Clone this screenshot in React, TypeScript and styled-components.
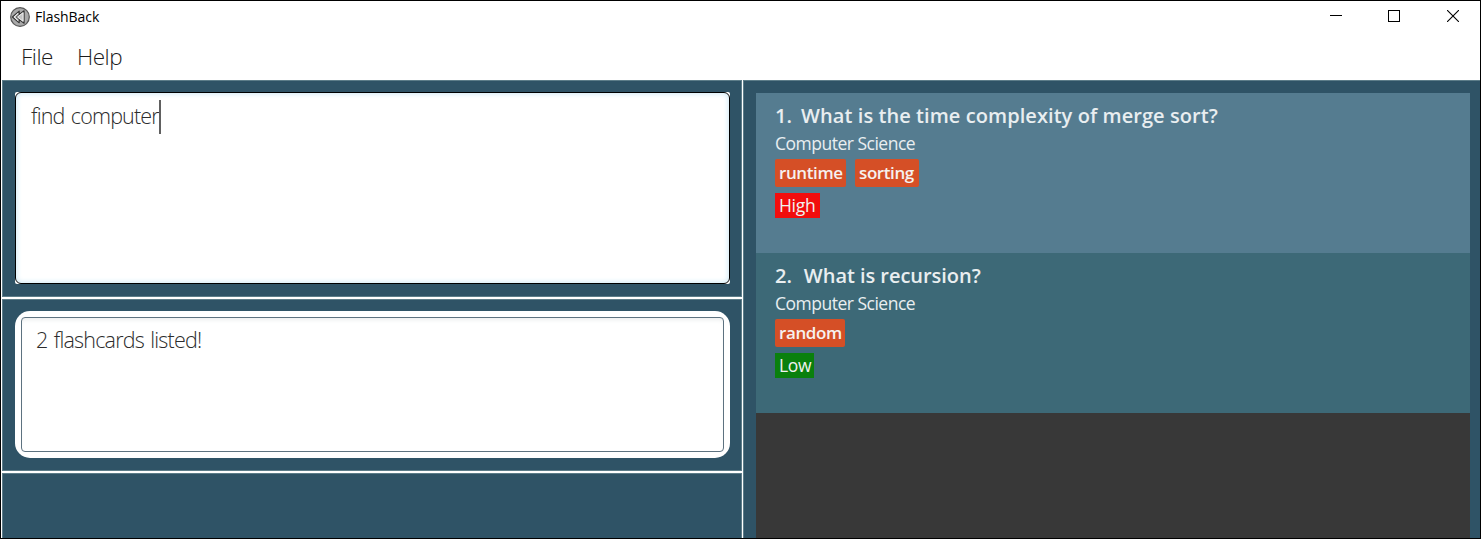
import React from "react";
import styled, { createGlobalStyle, css } from "styled-components";

const GlobalStyle = createGlobalStyle`
  * { box-sizing: border-box; }
  body { margin: 0; overflow: hidden; background: #fff; }
`;

const Window = styled.div`
  width: 1481px;
  height: 539px;
  border: 1px solid #000;
  padding-left: 1px;
  background: #fff;
  display: flex;
  flex-direction: column;
  font-family: "Open Sans", "Noto Sans", sans-serif;
`;

const TitleBar = styled.header`
  height: 31px;
  flex: none;
  display: flex;
  align-items: center;
  padding-left: 8px;
`;

const Title = styled.span`
  margin-left: 5px;
  flex: 1;
  font-size: 14px;
  line-height: 20px;
  letter-spacing: -0.05px;
  color: #000;
`;

const Controls = styled.div`
  display: flex;
  gap: 46px;
  padding: 0 21px 2px 0;
  svg { display: block; }
  svg:last-child { margin-left: 1px; }
`;

const MenuBar = styled.nav`
  height: 48px;
  flex: none;
  display: flex;
  gap: 24px;
  padding: 9px 0 0 19px;
`;

const MenuItem = styled.span<{ $w: number }>`
  width: ${(p) => p.$w}px;
  white-space: nowrap;
  font-size: 22.5px;
  line-height: 32px;
  font-weight: 300;
  letter-spacing: -0.5px;
  color: #1c1c1c;
`;

const Split = styled.main`
  flex: 1;
  min-height: 0;
  display: flex;
  gap: 1px;
`;

const LeftColumn = styled.div`
  width: 740px;
  display: flex;
  flex-direction: column;
  gap: 2px;
`;

const edge = css`
  background: #2f5366;
  border: 1px solid #5d7d89;
`;

const Pane = styled.section<{ $h?: number }>`
  ${edge}
  ${(p) => (p.$h ? `height: ${p.$h}px; flex: none;` : "flex: 1; border-bottom: 0;")}
  padding: 11px 11px 12px 12px;
  display: flex;
`;

const CommandFrame = styled.div`
  flex: 1;
  display: flex;
  background: #fff;
  border-radius: 2px;
`;

const CommandBox = styled.div`
  flex: 1;
  border: 1px solid #000;
  border-radius: 6px;
  background: #fff;
  box-shadow: inset 0 0 5px 1px #cfeaf6;
  padding: 7px 15px;
  display: flex;
  align-items: flex-start;
`;

const CommandText = styled.span`
  font-size: 21.5px;
  line-height: 32px;
  font-weight: 300;
  letter-spacing: -0.82px;
  word-spacing: 1.5px;
  color: #2c2c2c;
  white-space: nowrap;
`;

const Caret = styled.i`
  width: 2px;
  height: 34px;
  background: #606060;
`;

const ResultFrame = styled.div`
  flex: 1;
  background: #fff;
  border-radius: 15px;
  padding: 6px;
  display: flex;
`;

const ResultBox = styled.div`
  flex: 1;
  border: 1px solid #5d7280;
  border-radius: 4px;
  box-shadow: inset 0 4px 4px -2px #eceeee;
  padding: 6px 14px;
  font-size: 21.5px;
  line-height: 32px;
  font-weight: 300;
  letter-spacing: -0.8px;
  word-spacing: 1.5px;
  color: #2c2c2c;
`;

const RightPane = styled.section`
  ${edge}
  border-right: 0;
  border-bottom: 0;
  flex: 1;
  padding: 12px 10px 0 12px;
  display: flex;
`;

const List = styled.div`
  flex: 1;
  background: #383838;
`;

const Card = styled.article<{ $bg: string }>`
  height: 160px;
  background: ${(p) => p.$bg};
  padding: 8px 19px;
  display: flex;
  flex-direction: column;
  align-items: flex-start;
  color: #e9eef0;
`;

const Question = styled.h2<{ $gap: number; $spacing: number }>`
  margin: 0;
  display: flex;
  gap: ${(p) => p.$gap}px;
  font-size: 20px;
  line-height: 30px;
  font-weight: 600;
  letter-spacing: ${(p) => p.$spacing}px;
  white-space: nowrap;
`;

const Subject = styled.p`
  margin: 0;
  height: 26px;
  font-size: 17.5px;
  line-height: 25px;
  letter-spacing: -0.5px;
`;

const Tags = styled.div`
  margin-top: 2px;
  display: flex;
  gap: 9px;
`;

const Tag = styled.span<{ $w: number }>`
  width: ${(p) => p.$w}px;
  height: 28px;
  border-radius: 2px;
  padding-left: 4px;
  background: #d54f26;
  color: #f6f1ef;
  font-size: 17px;
  line-height: 27px;
  font-weight: 600;
  letter-spacing: -0.4px;
  white-space: nowrap;
`;

const Priority = styled.span<{ $w: number; $bg: string }>`
  margin-top: 6px;
  width: ${(p) => p.$w}px;
  height: 25px;
  padding-left: 4px;
  background: ${(p) => p.$bg};
  color: #f1f1f1;
  font-size: 17.5px;
  line-height: 24px;
  letter-spacing: -0.3px;
`;

const cards = [
  {
    question: "What is the time complexity of merge sort?",
    subject: "Computer Science",
    tags: [{ name: "runtime", w: 71 }, { name: "sorting", w: 64 }],
    priority: { name: "High", w: 45, bg: "#f20d0d" },
    bg: "#557c90",
    gap: 9,
    spacing: 0.07,
  },
  {
    question: "What is recursion?",
    subject: "Computer Science",
    tags: [{ name: "random", w: 70 }],
    priority: { name: "Low", w: 39, bg: "#0a800d" },
    bg: "#3d6977",
    gap: 12,
    spacing: -0.04,
  },
];

const Logo = () => (
  <svg width="20" height="20" viewBox="0 0 20 20">
    <circle cx="10" cy="10" r="9.3" fill="#a9a9a9" stroke="#555" strokeWidth="1.2" />
    <path
      d="M9.2 4.2v3.2l4.9-3.6v12.4l-4.9-3.6v3.2L2.4 10z"
      fill="#c4c4c4"
      stroke="#333"
      strokeWidth="1.1"
      strokeLinejoin="round"
    />
    <path d="M8.2 6.2 4 10l4.2 3.8M13 5.8 7.6 10l5.4 4.2z" fill="none" stroke="#f2f2f2" strokeWidth=".9" />
    <path d="M9.2 7.4 6.2 10l3 2.6" fill="none" stroke="#333" strokeWidth=".9" />
  </svg>
);

export default function App() {
  return (
    <Window>
      <GlobalStyle />
      <TitleBar>
        <Logo />
        <Title>FlashBack</Title>
        <Controls>
          <svg width="12" height="12" shapeRendering="crispEdges"><path d="M0 5.5h12" stroke="#000" /></svg>
          <svg width="12" height="12" shapeRendering="crispEdges"><rect x=".5" y=".5" width="11" height="11" fill="none" stroke="#000" /></svg>
          <svg width="12" height="12"><path d="M0 0l12 12M12 0L0 12" stroke="#000" strokeWidth="1.1" /></svg>
        </Controls>
      </TitleBar>
      <MenuBar>
        <MenuItem $w={32}>File</MenuItem>
        <MenuItem $w={46}>Help</MenuItem>
      </MenuBar>
      <Split>
        <LeftColumn>
          <Pane $h={217}>
            <CommandFrame>
              <CommandBox>
                <CommandText>find computer</CommandText>
                <Caret />
              </CommandBox>
            </CommandFrame>
          </Pane>
          <Pane $h={172}>
            <ResultFrame>
              <ResultBox>2 flashcards listed!</ResultBox>
            </ResultFrame>
          </Pane>
          <Pane />
        </LeftColumn>
        <RightPane>
          <List>
            {cards.map((c, i) => (
              <Card key={c.question} $bg={c.bg}>
                <Question $gap={c.gap} $spacing={c.spacing}>
                  <span>{i + 1}.</span>
                  <span>{c.question}</span>
                </Question>
                <Subject>{c.subject}</Subject>
                <Tags>
                  {c.tags.map((t) => (
                    <Tag key={t.name} $w={t.w}>{t.name}</Tag>
                  ))}
                </Tags>
                <Priority $w={c.priority.w} $bg={c.priority.bg}>{c.priority.name}</Priority>
              </Card>
            ))}
          </List>
        </RightPane>
      </Split>
    </Window>
  );
}
